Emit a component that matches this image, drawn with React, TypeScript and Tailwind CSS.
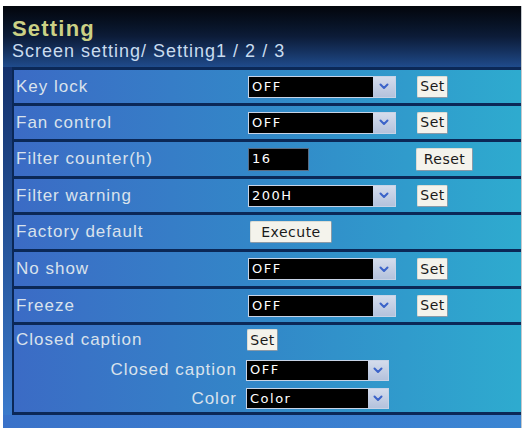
import React from "react";

const label = "text-[17px] tracking-[1px] text-[#d9e2ec] font-['Liberation_Sans',Arial,sans-serif]";
const valueFont = "font-['DejaVu_Sans',Verdana,sans-serif] text-[13px] tracking-[1.5px] text-white";

function Chevron() {
  return (
    <svg width="10" height="7" viewBox="0 0 10 7">
      <path d="M1.5 1.5 L5 5 L8.5 1.5" fill="none" stroke="#3b63c9" strokeWidth="2" strokeLinecap="round" strokeLinejoin="round" />
    </svg>
  );
}

function Select({ value, small = false }: { value: string; small?: boolean }) {
  return (
    <div className={`flex border border-[#c7d3e6] ${small ? "h-[21px] w-[143px]" : "h-[22px] w-[148px]"}`}>
      <div className={`flex flex-1 items-center bg-black pl-[3px] ${valueFont}`}>{value}</div>
      <div className={`flex ${small ? "w-[20px]" : "w-[22px]"} items-center justify-center bg-gradient-to-b from-[#d4dcec] to-[#b4c2dc]`}>
        <Chevron />
      </div>
    </div>
  );
}

function Btn({ text, w }: { text: string; w: string }) {
  return (
    <div
      className={`flex h-[22px] ${w} items-center justify-center rounded-[2px] border border-[#dcdcd4] border-b-[#8a9aa8] border-r-[#8a9aa8] bg-[#f4f3ec] font-['DejaVu_Sans',Verdana,sans-serif] text-[14px] tracking-[0.5px] text-[#1a1a1a]`}
    >
      {text}
    </div>
  );
}

function Row({ name, h, children }: { name: string; h: string; children: React.ReactNode }) {
  return (
    <div className={`flex ${h} items-center border-t-[3px] border-[#0b2857] pl-[2px]`}>
      <div className={`w-[232px] ${label}`}>{name}</div>
      {children}
    </div>
  );
}

function SelectSet({ value }: { value: string }) {
  return (
    <div className="flex items-center gap-[21px]">
      <Select value={value} />
      <Btn text="Set" w="w-[31px]" />
    </div>
  );
}

export default function App() {
  return (
    <div className="h-[428px] w-[528px] overflow-hidden bg-white pl-[3px] pt-[6px]">
      <div className="flex h-[422px] w-[519px] flex-col border-r border-[#c4c8cc]">
        <div className="h-[61px] bg-gradient-to-b from-[#03060c] via-[#0c1c38] to-[#1f4b8c] pl-[9px] pt-[10px]">
          <div className="font-['Liberation_Sans',Arial,sans-serif] text-[22px] font-bold leading-[25px] tracking-[1.2px] text-[#cbd185]">
            Setting
          </div>
          <div className="font-['Liberation_Sans',Arial,sans-serif] text-[18px] leading-[21px] tracking-[1px] text-[#c9dcef]">
            Screen setting/ Setting1 / 2 / 3
          </div>
        </div>
        <div className="flex flex-1">
          <div className="w-[9px] bg-gradient-to-b from-[#14316c] to-[#3a7acb]" />
          <div className="flex flex-1 flex-col border-l-2 border-[#0b2857] bg-gradient-to-r from-[#3b6bc5] via-[#3288c8] to-[#2eabcf]">
            <Row name="Key lock" h="h-[36px]">
              <SelectSet value="OFF" />
            </Row>
            <Row name="Fan control" h="h-[36px]">
              <SelectSet value="OFF" />
            </Row>
            <Row name="Filter counter(h)" h="h-[37px]">
              <div className="flex items-center gap-[107px]">
                <div className={`flex h-[23px] w-[61px] items-center border border-[#5a6a80] bg-black pl-[3px] ${valueFont}`}>16</div>
                <Btn text="Reset" w="w-[57px] h-[23px]" />
              </div>
            </Row>
            <Row name="Filter warning" h="h-[36px]">
              <SelectSet value="200H" />
            </Row>
            <Row name="Factory default" h="h-[37px]">
              <div className="pl-[2px]">
                <Btn text="Execute" w="w-[82px]" />
              </div>
            </Row>
            <Row name="No show" h="h-[37px]">
              <SelectSet value="OFF" />
            </Row>
            <Row name="Freeze" h="h-[36px]">
              <SelectSet value="OFF" />
            </Row>
            <div className="flex h-[93px] flex-col border-y-[3px] border-[#0b2857]">
              <div className="flex h-[30px] items-center pl-[2px]">
                <div className={`w-[231px] ${label}`}>Closed caption</div>
                <Btn text="Set" w="w-[31px] h-[21px]" />
              </div>
              <div className="flex h-[30px] items-center">
                <div className={`w-[232px] pr-[9px] text-right ${label}`}>Closed caption</div>
                <Select value="OFF" small />
              </div>
              <div className="flex h-[27px] items-center">
                <div className={`w-[232px] pr-[9px] text-right ${label}`}>Color</div>
                <Select value="Color" small />
              </div>
            </div>
          </div>
        </div>
        <div className="h-[13px] bg-gradient-to-r from-[#3a72c9] to-[#3b86d3]" />
      </div>
    </div>
  );
}
